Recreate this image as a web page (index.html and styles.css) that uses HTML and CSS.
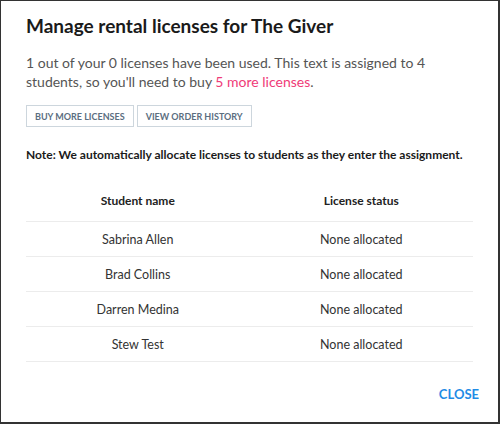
FILE: index.html
```html
<!DOCTYPE html>
<html lang="en">
<head>
    <meta charset="UTF-8">
    <meta name="viewport" content="width=device-width, initial-scale=1.0">
    <title>Manage rental licenses</title>
    <link rel="stylesheet" href="styles.css">
</head>
<body>

<div class="modal">
    <div class="content">
        <h1>Manage rental licenses for The Giver</h1>
        <p class="summary">1 out of your 0 licenses have been used. This text is assigned to 4 students, so you'll need to buy <a href="#">5 more licenses</a>.</p>

        <div class="actions">
            <button>Buy more licenses</button>
            <button>View order history</button>
        </div>

        <p class="note">Note: We automatically allocate licenses to students as they enter the assignment.</p>

        <table class="students">
            <thead>
                <tr>
                    <th>Student name</th>
                    <th>License status</th>
                </tr>
            </thead>
            <tbody>
                <tr><td>Sabrina Allen</td><td>None allocated</td></tr>
                <tr><td>Brad Collins</td><td>None allocated</td></tr>
                <tr><td>Darren Medina</td><td>None allocated</td></tr>
                <tr><td>Stew Test</td><td>None allocated</td></tr>
            </tbody>
        </table>
    </div>

    <div class="footer">
        <a href="#" class="close">CLOSE</a>
    </div>
</div>

</body>
</html>
```

FILE: styles.css
```css
body {
    margin: 0;
    padding: 0;
    font-family: Lato, "Noto Sans", sans-serif;
    background-color: #fff;
}

.modal {
    width: 500px;
    height: 424px;
    box-sizing: border-box;
    border: 1px solid #333;
    border-right-width: 2px;
    border-bottom-width: 2px;
    background-color: #fff;
}

.content {
    padding: 12px 25px 0;
}

h1 {
    margin: 0 0 14px;
    font-size: 19px;
    line-height: 26px;
    font-weight: 700;
    color: #1a1a1a;
}

.summary {
    margin: 0;
    font-size: 14px;
    line-height: 19px;
    color: #555;
}

.summary a {
    color: #ef3a77;
    text-decoration: none;
}

.actions {
    display: flex;
    gap: 3px;
    margin-top: 14px;
}

.actions button {
    height: 22px;
    margin: 0;
    padding: 0 8px;
    font-family: inherit;
    font-size: 9px;
    font-weight: 700;
    text-transform: uppercase;
    color: #5b6e7f;
    background-color: #fff;
    border: 1px solid #cdd6dd;
    cursor: pointer;
}

.note {
    margin: 20px 0 0;
    font-size: 12px;
    line-height: 16px;
    font-weight: 700;
    color: #1a1a1a;
}

.students {
    width: 100%;
    margin-top: 17px;
    border-collapse: collapse;
    table-layout: fixed;
    font-size: 12.5px;
    color: #333;
}

.students th {
    height: 41px;
    padding: 0;
    font-size: 12px;
    font-weight: 700;
    color: #222;
    text-align: center;
    border-bottom: 1px solid #ececec;
}

.students td {
    height: 34px;
    padding: 0;
    text-align: center;
    border-bottom: 1px solid #ececec;
}

.footer {
    padding: 21px 19px 0 0;
    text-align: right;
}

.close {
    font-size: 13px;
    font-weight: 700;
    color: #1f8ce6;
    text-decoration: none;
}
```
